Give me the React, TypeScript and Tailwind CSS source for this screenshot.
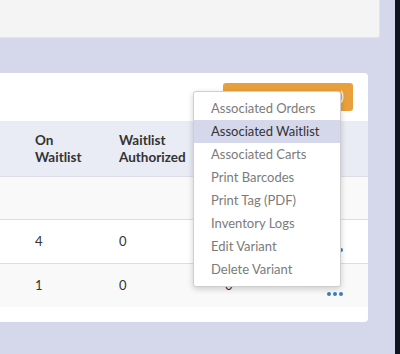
import React from "react";

const menuItems = [
  "Associated Orders",
  "Associated Waitlist",
  "Associated Carts",
  "Print Barcodes",
  "Print Tag (PDF)",
  "Inventory Logs",
  "Edit Variant",
  "Delete Variant",
];

// third column is mostly under the open menu, only the last row's value peeks out
const rows = [
  { bg: "bg-[#f9f9f9]", h: "h-[43px]", cells: ["", "", ""], dots: false },
  { bg: "bg-white", h: "h-[44px]", cells: ["4", "0", ""], dots: true },
  { bg: "bg-[#f9f9f9]", h: "h-[43px]", cells: ["1", "0", "0"], dots: true },
];

function Dots() {
  return (
    <div className="flex gap-[2px] pt-[17px]">
      <span className="w-[4px] h-[4px] rounded-full bg-[#3a7fc1]" />
      <span className="w-[4px] h-[4px] rounded-full bg-[#3a7fc1]" />
      <span className="w-[4px] h-[4px] rounded-full bg-[#3a7fc1]" />
    </div>
  );
}

export default function App() {
  return (
    <div
      className="relative w-[400px] h-[354px] overflow-hidden flex bg-[#d5d7ea]"
      style={{ fontFamily: "Lato, 'Liberation Sans', sans-serif" }}
    >
      <div className="w-[395px] flex flex-col">
        <div className="w-[380px] h-[38px] bg-[#f4f4f4] border-r border-b border-[#e4e4e4] rounded-br-[3px]" />

        <div className="mt-[35px] w-[368px] h-[249px] bg-white rounded-r-[4px] flex flex-col">
          <div className="h-[48px] flex items-start pt-[10px]">
            <div className="ml-[223px] w-[130px] h-[28px] rounded-[3px] bg-[#e9a03b] flex items-center justify-end pr-[9px] text-white text-[13px]">
              )
            </div>
          </div>

          <div className="h-[56px] bg-[#e9ebf5] border-b border-[#dcdde3] flex items-center text-[13.5px] font-bold text-[#333] leading-[17px]">
            <div className="w-[35px]" />
            <div className="w-[84px]">
              On
              <br />
              Waitlist
            </div>
            <div className="w-[106px]">
              Waitlist
              <br />
              Authorized
            </div>
          </div>

          {rows.map((r, i) => (
            <div
              key={i}
              className={`${r.bg} ${r.h} ${i < 2 ? "border-b border-[#dcdde3]" : ""} flex items-center text-[13px] text-[#333]`}
            >
              <div className="w-[35px]" />
              <div className="w-[84px]">{r.cells[0]}</div>
              <div className="w-[106px]">{r.cells[1]}</div>
              <div className="w-[102px]">{r.cells[2]}</div>
              {r.dots && <Dots />}
            </div>
          ))}
        </div>
      </div>
      <div className="flex-1 bg-[#0f1420]" />

      <div className="absolute left-[193px] top-[91px] w-[148px] py-[5px] bg-white border border-[#cfcfcf] rounded-[3px] shadow-[0_2px_6px_rgba(0,0,0,0.18)]">
        {menuItems.map((m, i) => (
          <div
            key={m}
            className={`h-[23px] flex items-center pl-[17px] text-[13px] ${
              i === 1 ? "bg-[#d5d7ea] text-[#333]" : "text-[#7b7b7b]"
            }`}
          >
            {m}
          </div>
        ))}
      </div>
    </div>
  );
}
